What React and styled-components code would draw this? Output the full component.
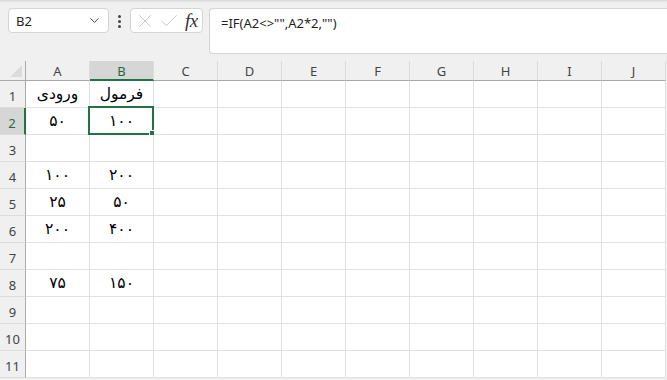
import React from 'react';
import styled, { createGlobalStyle } from 'styled-components';
import { ChevronDown, X, Check } from 'lucide-react';

const GlobalStyle = createGlobalStyle`
  html, body {
    margin: 0;
    padding: 0;
    height: 380px;
    overflow: hidden;
    background: #f0f0f0;
    font-family: "Noto Sans", "Open Sans", sans-serif;
  }
`;

const Toolbar = styled.div`
  display: flex;
  align-items: flex-start;
  height: 61px;
  box-sizing: border-box;
  padding: 8px 0 0 8px;
  background: linear-gradient(#d6d6d6 0, #ececec 2px, #f0f0f0 4px);
`;

const NameBox = styled.div`
  display: flex;
  align-items: center;
  justify-content: space-between;
  width: 101px;
  height: 25px;
  box-sizing: border-box;
  padding: 0 6px 0 7px;
  background: #fff;
  border: 1px solid #d4d4d4;
  border-radius: 4px;
  font-size: 13px;
  color: #262626;
`;

const Dots = styled.div`
  display: flex;
  flex-direction: column;
  align-items: center;
  gap: 2px;
  width: 21px;
  padding-top: 7px;

  span {
    width: 3px;
    height: 3px;
    border-radius: 50%;
    background: #444;
  }
`;

const FxBox = styled.div`
  display: flex;
  align-items: center;
  gap: 2px;
  width: 73px;
  height: 25px;
  box-sizing: border-box;
  padding: 0 4px 0 3px;
  background: #fff;
  border: 1px solid #d4d4d4;
  border-radius: 4px;
  color: #c2c2c2;
`;

const FxText = styled.span`
  margin-left: 3px;
  font-family: "Liberation Serif", serif;
  font-style: italic;
  font-size: 19px;
  line-height: 1;
  color: #333;
  letter-spacing: -0.5px;
`;

const FormulaBar = styled.div`
  flex: 1;
  height: 46px;
  box-sizing: border-box;
  margin-left: 6px;
  padding: 5px 0 0 11px;
  background: #fff;
  border: 1px solid #d4d4d4;
  border-right: none;
  border-radius: 4px 0 0 4px;
  font-size: 13px;
  color: #1f1f1f;
`;

const Sheet = styled.div`
  display: grid;
  grid-template-columns: 26px repeat(10, 64px);
  grid-auto-rows: 27px;
  grid-template-rows: 20px;
`;

const Corner = styled.div`
  position: relative;
  border-right: 1px solid #a9a9a9;
  border-bottom: 1px solid #a9a9a9;

  &::after {
    content: '';
    position: absolute;
    right: 3px;
    bottom: 3px;
    border-style: solid;
    border-width: 0 0 12px 12px;
    border-color: transparent transparent #dcdcdc transparent;
  }
`;

const ColHead = styled.div`
  display: flex;
  align-items: center;
  justify-content: center;
  box-sizing: border-box;
  padding-top: 1px;
  font-size: 13px;
  color: ${p => (p.$active ? '#1e6b41' : '#444')};
  background: ${p => (p.$active ? '#d6d6d6' : 'transparent')};
  border-right: 1px solid #dcdcdc;
  border-bottom: ${p => (p.$active ? '2px solid #217346' : '1px solid #a9a9a9')};
`;

const RowHead = styled.div`
  display: flex;
  align-items: flex-end;
  justify-content: center;
  box-sizing: border-box;
  padding-bottom: 2px;
  font-size: 13px;
  color: ${p => (p.$active ? '#1e6b41' : '#444')};
  background: ${p => (p.$active ? '#d6d6d6' : 'transparent')};
  border-right: ${p => (p.$active ? '2px solid #217346' : '1px solid #a9a9a9')};
  border-bottom: 1px solid #dcdcdc;
`;

const Cell = styled.div`
  position: relative;
  display: flex;
  align-items: center;
  justify-content: center;
  background: #fff;
  border-right: 1px solid #e1e1e1;
  border-bottom: 1px solid #e1e1e1;
  font-family: "DejaVu Sans", sans-serif;
  font-size: 15.5px;
  color: #000;
  direction: rtl;
`;

const Selection = styled.div`
  position: absolute;
  top: -2px;
  left: -2px;
  right: -1px;
  bottom: -1px;
  border: 2px solid #217346;
  pointer-events: none;

  &::after {
    content: '';
    position: absolute;
    right: -4px;
    bottom: -4px;
    width: 5px;
    height: 5px;
    background: #217346;
    border: 1px solid #fff;
  }
`;

const columns = ['A', 'B', 'C', 'D', 'E', 'F', 'G', 'H', 'I', 'J'];

const data = {
  1: ['ورودی', 'فرمول'],
  2: ['۵۰', '۱۰۰'],
  4: ['۱۰۰', '۲۰۰'],
  5: ['۲۵', '۵۰'],
  6: ['۲۰۰', '۴۰۰'],
  8: ['۷۵', '۱۵۰'],
};

const rows = Array.from({ length: 11 }, (_, i) => i + 1);

export default function App() {
  return (
    <>
      <GlobalStyle />
      <Toolbar>
        <NameBox>
          <span>B2</span>
          <ChevronDown size={15} strokeWidth={1.6} color="#444" />
        </NameBox>
        <Dots>
          <span />
          <span />
          <span />
        </Dots>
        <FxBox>
          <X size={22} strokeWidth={1} />
          <Check size={22} strokeWidth={1} />
          <FxText>fx</FxText>
        </FxBox>
        <FormulaBar>=IF(A2&lt;&gt;"",A2*2,"")</FormulaBar>
      </Toolbar>

      <Sheet>
        <Corner />
        {columns.map(c => (
          <ColHead key={c} $active={c === 'B'}>{c}</ColHead>
        ))}
        {rows.map(r => (
          <React.Fragment key={r}>
            <RowHead $active={r === 2}>{r}</RowHead>
            {columns.map((c, ci) => (
              <Cell key={c}>
                {data[r] && data[r][ci]}
                {r === 2 && c === 'B' && <Selection />}
              </Cell>
            ))}
          </React.Fragment>
        ))}
      </Sheet>
    </>
  );
}
